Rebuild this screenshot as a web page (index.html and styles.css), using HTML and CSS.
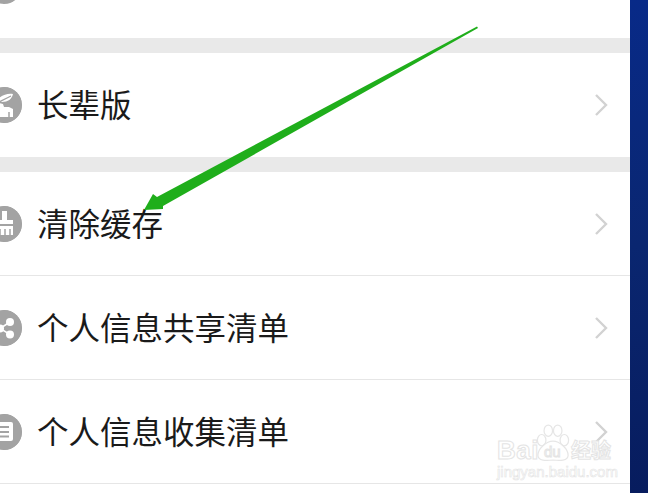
FILE: index.html
```html
<!DOCTYPE html>
<html>
<head>
    <title>设置</title>
    <meta charset="UTF-8">
    <meta name="viewport" content="width=device-width, initial-scale=1.0">
    <link rel="stylesheet" href="styles.css">
</head>
<body>
    <div class="screen">
        <div class="settings">
            <div class="row row-cut">
                <span class="icon"></span>
                <span class="label">隐私设置与权限</span>
            </div>
            <div class="band"></div>
            <div class="row">
                <svg class="icon" viewBox="0 0 36 36">
                    <circle cx="18" cy="18" r="18" fill="#a3a3a3"/>
                    <path d="M13 11c4-3 9-5 14-4-1 5-5 8-11 8l-3-1z M13 16l4 1 1 3h5l4 2v8H13z" fill="#fff"/>
                    <path d="M13 15l12-6" stroke="#a3a3a3" stroke-width="1.200"/>
                    <path d="M23 25v5" stroke="#a3a3a3" stroke-width="1.500"/>
                </svg>
                <span class="label">长辈版</span>
                <svg class="chevron" viewBox="0 0 14 24"><path d="M2 2l10 10-10 10"/></svg>
            </div>
            <div class="band"></div>
            <div class="row line">
                <svg class="icon" viewBox="0 0 36 36">
                    <circle cx="18" cy="18" r="18" fill="#a3a3a3"/>
                    <path d="M16 5h5v9h6v4H9v-4h7z M9 20h18v9H9z" fill="#fff"/>
                    <path d="M14 23v6M19 23v6M24 23v6" stroke="#a3a3a3" stroke-width="1.5"/>
                </svg>
                <span class="label">清除缓存</span>
                <svg class="chevron" viewBox="0 0 14 24"><path d="M2 2l10 10-10 10"/></svg>
            </div>
            <div class="row line">
                <svg class="icon" viewBox="0 0 36 36">
                    <circle cx="18" cy="18" r="18" fill="#a3a3a3"/>
                    <path d="M24 12L14 18.500l10 6" fill="none" stroke="#fff" stroke-width="1.500"/>
                    <circle cx="24" cy="12" r="4" fill="#fff"/>
                    <circle cx="14" cy="18.500" r="4" fill="#fff"/>
                    <circle cx="24" cy="24.500" r="4" fill="#fff"/>
                </svg>
                <span class="label">个人信息共享清单</span>
                <svg class="chevron" viewBox="0 0 14 24"><path d="M2 2l10 10-10 10"/></svg>
            </div>
            <div class="row line">
                <svg class="icon" viewBox="0 0 36 36">
                    <circle cx="18" cy="18" r="18" fill="#a3a3a3"/>
                    <rect x="8" y="8" width="19" height="19" rx="2" fill="#fff"/>
                    <path d="M8 13h15M8 18h15M8 22.500h15" stroke="#a3a3a3" stroke-width="1.800"/>
                </svg>
                <span class="label">个人信息收集清单</span>
                <svg class="chevron" viewBox="0 0 14 24"><path d="M2 2l10 10-10 10"/></svg>
            </div>
        </div>
        <div class="side"></div>
    </div>

    <!-- arrow drawn over the list -->
    <svg class="arrow" viewBox="0 0 648 493">
        <path d="M477 26.500L157 197 153 194 144 210 163 209 163 206 478 28Z" fill="#1fae1b"/>
    </svg>

    <div class="mark">
        <span class="mark-bai">Bai</span>
        <div class="paw">
            <svg class="paw-toes" viewBox="0 0 36 40">
                <g fill="#fff" stroke="#e6e6e6" stroke-width="1.300">
                    <ellipse cx="6" cy="17" rx="4.500" ry="6"/>
                    <ellipse cx="13" cy="7" rx="4.500" ry="6"/>
                    <ellipse cx="23" cy="7" rx="4.500" ry="6"/>
                    <ellipse cx="30" cy="17" rx="4.500" ry="6"/>
                    <path d="M18 18c7 0 16 8 16 15 0 6-9 6-16 5-7 1-16 1-16-5 0-7 9-15 16-15z"/>
                </g>
            </svg>
            <span class="mark-du">du</span>
        </div>
        <span class="mark-jy">经验</span>
        <div class="mark-url">jingyan.baidu.com</div>
    </div>
</body>
</html>
```
FILE: styles.css
```css
html, body {
    margin: 0;
    height: 100%;
    overflow: hidden;
    background: #fff;
}

body {
    font-family: "Noto Sans CJK SC", "Liberation Sans", sans-serif;
}

.screen {
    display: flex;
    height: 493px;
}

.settings {
    width: 630px;
    flex: none;
    margin-top: -66px;
    background: #fff;
}

.side {
    flex: 1;
    background: linear-gradient(180deg, #082a88 0%, #0a2670 50%, #071c5e 100%);
}

.band {
    height: 15px;
    background: #e9e9e9;
}

.row {
    height: 104px;
    display: flex;
    align-items: center;
    box-sizing: border-box;
}

.row.line {
    border-bottom: 1px solid #e6e6e6;
}

.icon {
    width: 36px;
    height: 36px;
    margin-left: -14px;
    margin-right: 15px;
    flex: none;
    border-radius: 50%;
    background: #a3a3a3;
}

.label {
    margin-bottom: 4px;
    font-size: 31.5px;
    color: #1a1a1a;
    white-space: nowrap;
}

.row-cut .label {
    margin-bottom: 8px;
}

.chevron {
    width: 14px;
    height: 24px;
    margin-left: auto;
    margin-right: 22px;
    flex: none;
    fill: none;
    stroke: #d2d2d2;
    stroke-width: 2.4;
}

.arrow {
    position: absolute;
    left: 0;
    top: 0;
    width: 648px;
    height: 493px;
}

/* watermark sits over the last row */
.mark {
    position: absolute;
    left: 497px;
    top: 423px;
    width: 118px;
    display: flex;
    flex-wrap: wrap;
    color: #fff;
    -webkit-text-stroke: 1px #e4e4e4;
}

.mark-bai {
    width: 39px;
    height: 40px;
    font-family: "Liberation Sans", sans-serif;
    font-size: 26px;
    font-weight: 700;
    line-height: 54px;
    letter-spacing: 0.5px;
}

.paw {
    position: relative;
    width: 34px;
    height: 40px;
}

.paw-toes {
    width: 34px;
    height: 40px;
    display: block;
}

.mark-du {
    position: absolute;
    left: 8px;
    top: 20px;
    font-family: "Liberation Sans", sans-serif;
    font-size: 15px;
    line-height: 18px;
}

.mark-jy {
    height: 40px;
    margin-left: 1px;
    font-size: 20px;
    font-weight: 700;
    line-height: 54px;
    white-space: nowrap;
}

.mark-url {
    width: 118px;
    margin-top: 1px;
    font-family: "Liberation Sans", sans-serif;
    font-size: 15px;
    line-height: 16px;
    white-space: nowrap;
    -webkit-text-stroke: 0.6px #e4e4e4;
}
```
